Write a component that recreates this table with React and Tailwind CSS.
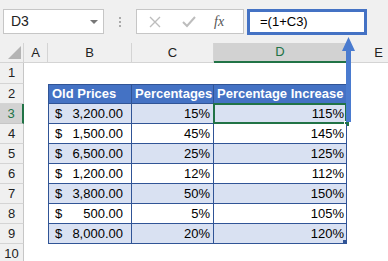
const rows = [
  ["3,200.00", "15%", "115%"],
  ["1,500.00", "45%", "145%"],
  ["6,500.00", "25%", "125%"],
  ["1,200.00", "12%", "112%"],
  ["3,800.00", "50%", "150%"],
  ["500.00", "5%", "105%"],
  ["8,000.00", "20%", "120%"],
];

const font = { fontFamily: '"Liberation Sans", Arial, sans-serif' };

function Toolbar() {
  return (
    <div className="flex h-[43px] items-start bg-[#f0f0f0] pt-[9px]">
      <div className="ml-[3px] flex h-[25px] w-[101px] items-center justify-between border border-[#c6c6c6] bg-white pl-[7px] pr-[5px] text-[14px] text-[#222]">
        <span>D3</span>
        <span className="h-0 w-0 border-x-[4px] border-t-[4px] border-x-transparent border-t-[#777]" />
      </div>
      <div className="ml-[15px] flex h-[25px] flex-col justify-center gap-[2px]">
        <span className="h-[2px] w-[2px] bg-[#aaa]" />
        <span className="h-[2px] w-[2px] bg-[#aaa]" />
        <span className="h-[2px] w-[2px] bg-[#aaa]" />
      </div>
      <div className="ml-[15px] flex h-[25px] w-[108px] items-center border border-[#c6c6c6] bg-white">
        <svg width="12" height="12" viewBox="0 0 12 12" className="ml-[12px]">
          <path d="M1 1 L11 11 M11 1 L1 11" stroke="#bdbdbd" strokeWidth="1.4" fill="none" />
        </svg>
        <svg width="14" height="12" viewBox="0 0 14 12" className="ml-[21px]">
          <path d="M1 6 L5 10 L13 1" stroke="#bdbdbd" strokeWidth="2" fill="none" />
        </svg>
        <span
          className="ml-[18px] text-[14px] italic text-[#555]"
          style={{ fontFamily: '"Liberation Serif", serif' }}
        >
          fx
        </span>
      </div>
      <div className="ml-[3px] flex h-[26px] w-[120px] items-center border-[3px] border-[#4472c4] bg-white pl-[10px] text-[13px] text-black">
        =(1+C3)
      </div>
    </div>
  );
}

function ColHeader({ label, active }) {
  return (
    <div
      className={
        active
          ? "flex items-center justify-center border-b-2 border-r border-b-[#217346] border-r-[#c6c6c6] bg-[#d2d2d2] text-[13px] text-[#217346]"
          : "flex items-center justify-center border-b border-r border-[#d4d4d4] bg-[#f0f0f0] text-[13px] text-[#222]"
      }
    >
      {label}
    </div>
  );
}

function RowHeader({ n, active }) {
  return (
    <div
      className={
        active
          ? "flex items-center justify-center border-b border-r-2 border-b-[#c6c6c6] border-r-[#217346] bg-[#d2d2d2] text-[13px] text-[#217346]"
          : "flex items-center justify-center border-b border-r border-b-[#d4d4d4] border-r-[#c6c6c6] bg-[#f0f0f0] text-[13px] text-[#222]"
      }
    >
      {n}
    </div>
  );
}

export default function App() {
  const sheetRows = [];
  for (let r = 1; r <= 10; r++) {
    const cells = [<RowHeader key="h" n={r} active={r === 3} />, <div key="a" className="bg-white" />];
    if (r === 2) {
      cells.push(
        <div key="b" className="flex items-center border border-[#305496] bg-[#4472c4] pl-[3px] text-[13px] font-bold text-white">
          Old Prices
        </div>,
        <div key="c" className="flex items-center border-y border-r border-[#305496] bg-[#4472c4] pl-[3px] text-[13px] font-bold text-white">
          Percentages
        </div>,
        <div key="d" className="flex items-center border-y border-r border-[#305496] bg-[#4472c4] pl-[3px] text-[13px] font-bold text-white">
          Percentage Increase
        </div>
      );
    } else if (r >= 3 && r <= 9) {
      const [price, pct, inc] = rows[r - 3];
      const bg = r % 2 === 1 ? "bg-[#d9e1f2]" : "bg-white";
      cells.push(
        <div key="b" className={`flex items-center justify-between border-x border-b border-[#305496] pl-[6px] pr-[8px] text-[13px] text-black ${bg}`}>
          <span>$</span>
          <span>{price}</span>
        </div>,
        <div key="c" className={`flex items-center justify-end border-b border-r border-[#305496] pr-[3px] text-[13px] text-black ${bg}`}>
          {pct}
        </div>,
        <div key="d" className={`relative flex items-center justify-end border-b border-r border-[#305496] pr-[2px] text-[13px] text-black ${bg}`}>
          {inc}
          {r === 3 && (
            <>
              <span className="absolute -left-px -top-px bottom-[-1px] right-[-1px] border-2 border-[#217346]" />
              <span className="absolute bottom-[-4px] right-[-4px] h-[6px] w-[6px] border border-white bg-[#217346]" />
            </>
          )}
          {r === 9 && <span className="absolute bottom-0 right-0 h-[3px] w-[3px] bg-[#305496]" />}
        </div>
      );
    } else {
      cells.push(<div key="b" className="bg-white" />, <div key="c" className="bg-white" />, <div key="d" className="bg-white" />);
    }
    cells.push(<div key="e" className="bg-white" />);
    sheetRows.push(...cells.map((c, i) => ({ ...c, key: `${r}-${i}` })));
  }

  return (
    <div className="relative h-[261px] w-[388px] overflow-hidden bg-white" style={font}>
      <Toolbar />
      <div className="grid grid-cols-[24px_24px_84px_82px_133px_64px] grid-rows-[20px_21px_repeat(9,20px)]">
        <div className="relative border-b border-r border-[#d4d4d4] bg-[#f0f0f0]">
          <span className="absolute bottom-[3px] right-[2px] h-0 w-0 border-b-[13px] border-l-[13px] border-b-[#b4b4b4] border-l-transparent" />
        </div>
        <ColHeader label="A" />
        <ColHeader label="B" />
        <ColHeader label="C" />
        <ColHeader label="D" active />
        <ColHeader label="E" />
        {sheetRows}
      </div>
      <svg className="absolute left-[341px] top-[37px]" width="15" height="85" viewBox="0 0 15 85">
        <path d="M7.5 0 L14 14 L10 14 L10 85 L5 85 L5 14 L1 14 Z" fill="#4a7bcf" />
      </svg>
    </div>
  );
}
